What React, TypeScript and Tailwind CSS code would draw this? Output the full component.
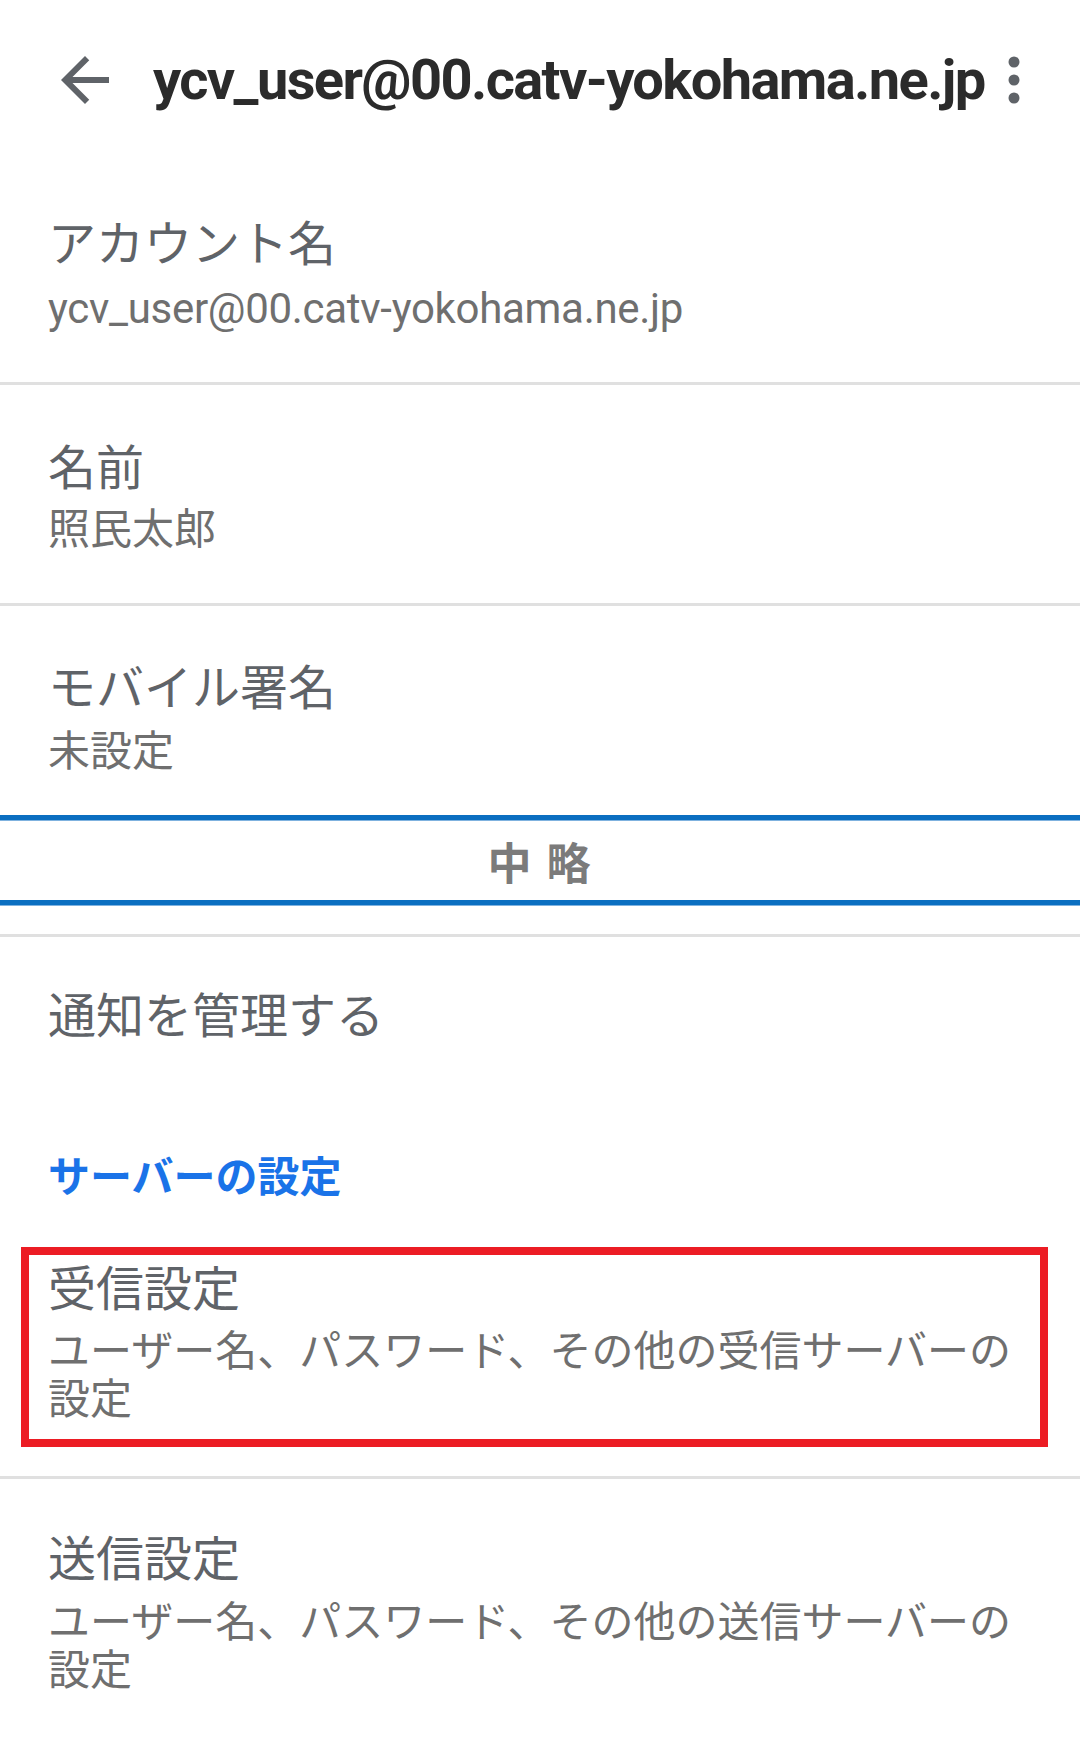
function BackArrow() {
  return (
    <svg width="48" height="48" viewBox="4 4 16 16" className="shrink-0 fill-[#5f6368]">
      <path d="M20 11H7.83l5.59-5.59L12 4l-8 8 8 8 1.41-1.41L7.83 13H20v-2z" />
    </svg>
  )
}

function Dots() {
  return (
    <svg width="12" height="48" viewBox="0 0 12 48" className="shrink-0 fill-[#5f6368]">
      <circle cx="6" cy="6" r="5.5" />
      <circle cx="6" cy="24" r="5.5" />
      <circle cx="6" cy="42" r="5.5" />
    </svg>
  )
}

const Divider = () => <div className="h-[3px] w-full bg-[#e0e0e0]" />

const BlueRule = () => (
  <div className="w-full">
    <div className="h-[5px] bg-[#0b6fc1]" />
    <div className="h-px bg-[#7fb2df]" />
  </div>
)

export default function App() {
  return (
    <div className="w-[1080px] h-[1742px] bg-white overflow-hidden font-['Roboto','Noto_Sans_CJK_JP',sans-serif]">
      {/* app bar */}
      <header className="h-[160px] flex items-center pl-[61px] pr-[60px]">
        <BackArrow />
        <h1 className="ml-[44px] flex-1 text-[56px] leading-[64px] font-bold tracking-[-1.6px] text-[#2b2b2b] whitespace-nowrap">
          ycv_user@00.catv-yokohama.ne.jp
        </h1>
        <Dots />
      </header>

      <div className="pl-[48px] pr-[40px] pt-[53px] pb-[49px]">
        <div className="text-[48px] leading-[64px] text-[#5f6368]">アカウント名</div>
        <div className="mt-[8px] text-[42px] leading-[48px] text-[#6f6f6f] tracking-[-0.3px]">
          ycv_user@00.catv-yokohama.ne.jp
        </div>
      </div>
      <Divider />

      <div className="pl-[48px] pr-[40px] pt-[52px] pb-[49px]">
        <div className="text-[48px] leading-[64px] text-[#5f6368]">名前</div>
        <div className="mt-[5px] text-[42px] leading-[48px] text-[#6f6f6f]">照民太郎</div>
      </div>
      <Divider />

      <div className="pl-[48px] pr-[40px] pt-[51px] pb-[39px]">
        <div className="text-[48px] leading-[64px] text-[#5f6368]">モバイル署名</div>
        <div className="mt-[7px] text-[42px] leading-[48px] text-[#6f6f6f]">未設定</div>
      </div>

      {/* omitted section marker */}
      <BlueRule />
      <div className="h-[79px] flex items-center justify-center pt-[8px]">
        <span className="text-[44px] leading-[48px] font-bold text-[#7b7b7b] tracking-[2px]">中 略</span>
      </div>
      <BlueRule />

      <div className="h-[28px]" />
      <Divider />

      <div className="pl-[48px] pr-[40px] pt-[48px]">
        <div className="text-[48px] leading-[64px] text-[#5f6368]">通知を管理する</div>
        <div className="mt-[105px] text-[42px] leading-[48px] font-bold text-[#1a73e8]">サーバーの設定</div>
      </div>

      <div className="mt-[45px] ml-[21px] w-[1027px] border-[8px] border-[#ec1c24] pl-[19px] pt-[3px] pb-[15px]">
        <div className="text-[48px] leading-[64px] text-[#5f6368]">受信設定</div>
        <div className="mt-[6px] text-[42px] leading-[48px] text-[#6f6f6f]">
          ユーザー名、パスワード、その他の受信サーバーの設定
        </div>
      </div>

      <div className="h-[29px]" />
      <Divider />

      <div className="pl-[48px] pr-[30px] pt-[49px]">
        <div className="text-[48px] leading-[64px] text-[#5f6368]">送信設定</div>
        <div className="mt-[7px] text-[42px] leading-[48px] text-[#6f6f6f]">
          ユーザー名、パスワード、その他の送信サーバーの設定
        </div>
      </div>
    </div>
  )
}
